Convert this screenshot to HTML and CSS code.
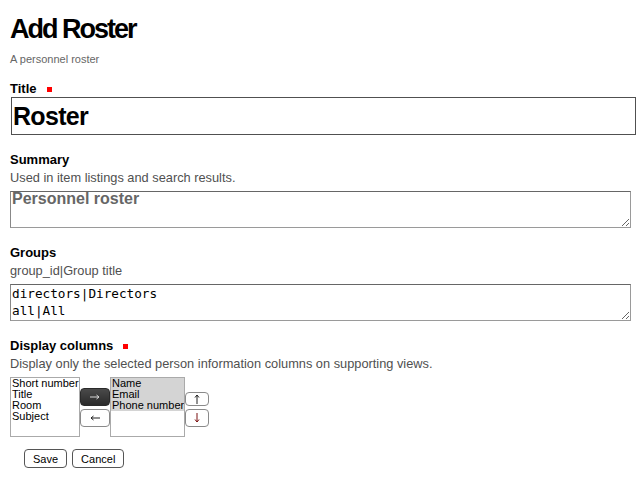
FILE: index.html
```html
<!DOCTYPE html>
<html lang="en">
<head>
<meta charset="utf-8">
<title>Add Roster</title>
<link rel="stylesheet" href="styles.css">
</head>
<body>
<h1 class="doc-title">Add Roster</h1>
<p class="doc-desc">A personnel roster</p>

<form class="edit-form">
  <div class="field field-first">
    <label class="field-label" for="title">Title<span class="required" title="Required"></span></label>
    <input class="title-input" id="title" type="text" value="Roster">
  </div>

  <div class="field">
    <label class="field-label" for="summary">Summary</label>
    <div class="help">Used in item listings and search results.</div>
    <textarea class="summary-input" id="summary">Personnel roster</textarea>
  </div>

  <div class="field">
    <label class="field-label" for="groups">Groups</label>
    <div class="help">group_id|Group title</div>
    <textarea class="groups-input" id="groups">directors|Directors
all|All</textarea>
  </div>

  <div class="field">
    <label class="field-label">Display columns<span class="required" title="Required"></span></label>
    <div class="help">Display only the selected person information columns on supporting views.</div>
    <div class="inout">
      <div class="listbox listbox-from" role="listbox">
        <div class="opt">Short number</div>
        <div class="opt">Title</div>
        <div class="opt">Room</div>
        <div class="opt">Subject</div>
      </div>
      <div class="btn-col">
        <button type="button" class="arrow-btn arrow-dark" aria-label="Add">
          <svg width="10" height="6" viewBox="0 0 10 6"><path d="M0 3H9M6.5 1L9 3L6.5 5" fill="none" stroke="#d8d8d8" stroke-width="1"/></svg>
        </button>
        <button type="button" class="arrow-btn" aria-label="Remove">
          <svg width="10" height="6" viewBox="0 0 10 6"><path d="M10 3H1M3.5 1L1 3L3.5 5" fill="none" stroke="#222" stroke-width="1"/></svg>
        </button>
      </div>
      <div class="listbox listbox-to" role="listbox">
        <div class="opt opt-sel">Name</div>
        <div class="opt opt-sel">Email</div>
        <div class="opt opt-sel">Phone number</div>
      </div>
      <div class="btn-col btn-col-order">
        <button type="button" class="order-btn order-up" aria-label="Move up">
          <svg width="6" height="10" viewBox="0 0 6 10"><path d="M3 10V1M1 3.5L3 1L5 3.5" fill="none" stroke="#222" stroke-width="1"/></svg>
        </button>
        <button type="button" class="order-btn order-down" aria-label="Move down">
          <svg width="6" height="10" viewBox="0 0 6 10"><path d="M3 0V9M1 6.5L3 9L5 6.5" fill="none" stroke="#7a1010" stroke-width="1"/></svg>
        </button>
      </div>
    </div>
  </div>

  <div class="form-buttons">
    <button type="submit" class="form-btn">Save</button>
    <button type="button" class="form-btn">Cancel</button>
  </div>
</form>
</body>
</html>
```

FILE: styles.css
```css
body {
  margin: 0;
  padding: 16px 10px 0;
  font-family: "Liberation Sans", Arial, sans-serif;
  color: #000;
  background: #fff;
}

.doc-title {
  margin: 0;
  font-size: 27px;
  line-height: 27px;
  font-weight: bold;
  letter-spacing: -2px;
}

.doc-desc {
  margin: 10px 0 0;
  font-size: 11px;
  line-height: 13px;
  color: #666;
}

.edit-form {
  margin: 0;
}

.field {
  margin-top: 17px;
}

.field-first {
  margin-top: 15px;
}

.field-label {
  display: block;
  font-size: 13px;
  line-height: 16px;
  font-weight: bold;
}

.required {
  display: inline-block;
  width: 5px;
  height: 5px;
  background: #f00;
  margin-left: 10px;
  margin-bottom: 1px;
}

.help {
  margin-top: 3px;
  font-size: 12.8px;
  line-height: 14px;
  color: #505050;
}

.title-input {
  display: block;
  box-sizing: border-box;
  width: 625px;
  height: 38px;
  margin: 0 0 0 1px;
  padding: 0 0 0 1px;
  border: 1px solid #505050;
  font-family: "Liberation Sans", Arial, sans-serif;
  font-size: 25px;
  font-weight: bold;
  letter-spacing: -0.7px;
  color: #000;
  outline: none;
}

.summary-input,
.groups-input {
  display: block;
  box-sizing: border-box;
  width: 621px;
  margin: 6px 0 0;
  border: 1px solid;
  border-color: #666 #9a9a9a #9a9a9a #888;
  outline: none;
}

.summary-input {
  height: 37px;
  padding: 0 1px;
  font-family: "Liberation Sans", Arial, sans-serif;
  font-size: 16px;
  line-height: 13px;
  font-weight: bold;
  color: #666;
  overflow: hidden;
}

.groups-input {
  height: 37px;
  padding: 0 1px;
  font-family: "DejaVu Sans Mono", monospace;
  font-size: 12.7px;
  line-height: 17px;
  color: #000;
  overflow: hidden;
}

.inout {
  display: flex;
  align-items: center;
  margin-top: 6px;
}

.listbox {
  box-sizing: border-box;
  height: 60px;
  border: 1px solid #aaa;
  background: #fff;
  font-size: 11px;
  line-height: 11px;
  overflow: hidden;
}

.listbox-from {
  width: 70px;
}

.listbox-to {
  width: 75px;
}

.opt {
  padding: 0 1px;
  white-space: nowrap;
}

.opt-sel {
  background: #d4d4d4;
}

.btn-col {
  display: flex;
  flex-direction: column;
  gap: 3px;
}

.arrow-btn,
.order-btn {
  display: flex;
  align-items: center;
  justify-content: center;
  box-sizing: border-box;
  padding: 0;
  margin: 0;
  border: 1px solid #8a8a8a;
  border-radius: 4px;
  background: #fff;
}

.arrow-btn {
  width: 30px;
  height: 18px;
}

.arrow-dark {
  background: linear-gradient(#4a4a4a, #2a2a2a);
  border-color: #2a2a2a;
}

.btn-col-order {
  margin-top: 4px;
}

.order-btn {
  width: 24px;
}

.order-up {
  height: 14px;
}

.order-down {
  height: 18px;
}

.form-buttons {
  display: flex;
  gap: 5px;
  margin: 12px 0 0 14px;
}

.form-btn {
  box-sizing: border-box;
  height: 19px;
  padding: 0 8px;
  border: 1px solid #555;
  border-radius: 4px;
  background: #fff;
  font-family: "Liberation Sans", Arial, sans-serif;
  font-size: 11px;
  color: #000;
}
```
